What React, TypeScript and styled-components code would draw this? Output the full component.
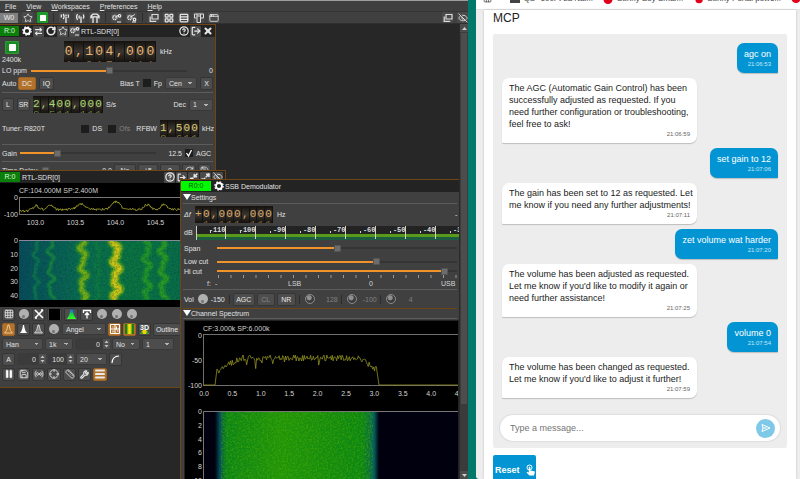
import React from "react";
import styled, { createGlobalStyle, css } from "styled-components";
import {
  Star, LayoutGrid, Rows3, AppWindow, EyeOff, CircleHelp, LogOut, X, RotateCw,
  ArrowRightLeft, Wrench, Minimize2, Maximize2, Grid3x3, Save, Radio, Crosshair, Ruler, Menu as MenuIcon, Pause,
} from "lucide-react";

const GlobalStyle = createGlobalStyle`
  * { box-sizing: border-box; }
  html, body, #root { height: 100%; }
  body { margin: 0; overflow: hidden; font-family: "Liberation Sans", Arial, sans-serif; }
  button, input, select { font: inherit; color: inherit; margin: 0; }
`;

const line = "#6e4513";
const panel = "#404040";

/* ---------- page frame ---------- */
const Page = styled.div`
  display: flex;
  height: 100vh;
  overflow: hidden;
  background: #00786a;
`;
const RadioApp = styled.main`
  flex: 0 0 58.5%;
  min-width: 0;
  display: flex;
  flex-direction: column;
  border-top: 1px solid #9b9f9d;
  background: ${panel};
  color: #e2e2e2;
  font-size: 7px;
  line-height: 9px;
`;
const MenuBar = styled.nav`
  display: flex;
  align-items: center;
  gap: 10px;
  height: 11px;
  padding-left: 5px;
  border-bottom: 1px solid #353535;
`;
const MenuItem = styled.button`
  border: 0;
  padding: 0;
  background: none;
  &::first-letter { text-decoration: underline; }
`;
const Toolbar = styled.div`
  display: flex;
  align-items: center;
  gap: 4px;
  height: 12px;
  border-bottom: 1px solid #303030;
`;
const WorkTag = styled.span`
  width: 18px;
  line-height: 10px;
  text-align: center;
  background: #808080;
  color: #eee;
`;
const Tool = styled.button<{ $on?: boolean; $flat?: boolean }>`
  display: inline-flex;
  align-items: center;
  justify-content: center;
  flex: none;
  width: 11px;
  height: 11px;
  padding: 0;
  border: 0;
  border-radius: 1px;
  color: #e6e6e6;
  background: ${(p) => (p.$on ? "#1f9a2c" : p.$flat ? "transparent" : "#4a4a4a")};
`;
const Divider = styled.i`
  width: 1px;
  height: 9px;
  margin: 0 1px;
  background: #2c2c2c;
`;
const Grow = styled.span`flex: 1;`;

const Desk = styled.div`
  flex: 1;
  min-height: 0;
  display: flex;
`;
const Canvas = styled.div`
  position: relative;
  flex: 1;
  overflow: hidden;
  background: #272727;
`;
const ScrollTrack = styled.div`
  display: flex;
  flex-direction: column;
  width: 9px;
  border-left: 1px solid #2a2a2a;
  background: #3b3b3b;
`;
const ScrollEnd = styled.button`
  display: flex;
  align-items: center;
  justify-content: center;
  height: 8px;
  padding: 0;
  border: 0;
  background: #4c4c4c;
`;
const ScrollThumb = styled.div`
  height: 82%;
  background: #4d4d4d;
  border: 1px solid #3c3c3c;
`;

/* ---------- sub-windows on the desktop ---------- */
const Win = styled.section<{ $x: number; $y: number; $w?: number; $h?: number }>`
  position: absolute;
  left: ${(p) => p.$x}px;
  top: ${(p) => p.$y}px;
  ${(p) => (p.$w ? css`width: ${p.$w}px;` : css`right: -1px;`)}
  ${(p) => (p.$h ? css`height: ${p.$h}px;` : css`bottom: -1px;`)}
  border: 1px solid ${line};
  border-left-width: ${(p) => (p.$x ? 1 : 0)}px;
  background: ${panel};
  overflow: hidden;
`;
const TitleBar = styled.header`
  display: flex;
  align-items: center;
  gap: 1px;
  height: 12px;
  padding-right: 2px;
  background: #232323;
`;
const Badge = styled.span<{ $w: number; $bright?: boolean }>`
  width: ${(p) => p.$w}px;
  line-height: 10px;
  margin-right: 1px;
  text-align: center;
  background: ${(p) => (p.$bright ? "#00fb00" : "#0a800a")};
  color: ${(p) => (p.$bright ? "#145014" : "#dff5df")};
`;
const Row = styled.div<{ $h: number; $mt?: number; $gap?: number; $pl?: number; $pr?: number }>`
  display: flex;
  align-items: center;
  gap: ${(p) => p.$gap ?? 3}px;
  height: ${(p) => p.$h}px;
  margin-top: ${(p) => p.$mt ?? 0}px;
  padding-left: ${(p) => p.$pl ?? 2}px;
  padding-right: ${(p) => p.$pr ?? 2}px;
  white-space: nowrap;
`;
const Rule = styled.hr<{ $mt?: number; $c?: string }>`
  height: 1px;
  margin: ${(p) => p.$mt ?? 2}px 2px 0;
  border: 0;
  background: ${(p) => p.$c ?? "#5c5c5c"};
`;
const Label = styled.label<{ $w?: number; $dim?: boolean; $right?: boolean }>`
  flex: none;
  width: ${(p) => (p.$w ? p.$w + "px" : "auto")};
  text-align: ${(p) => (p.$right ? "right" : "left")};
  color: ${(p) => (p.$dim ? "#808080" : "inherit")};
`;
const Btn = styled.button<{ $w: number; $on?: boolean; $dim?: boolean }>`
  display: inline-flex;
  align-items: center;
  justify-content: center;
  flex: none;
  width: ${(p) => p.$w}px;
  height: 13px;
  padding: 0;
  border: 1px solid ${(p) => (p.$on ? "#9b6424" : "#353535")};
  border-radius: 2px;
  background: ${(p) => (p.$on ? "#b3722a" : "#4d4d4d")};
  color: ${(p) => (p.$dim ? "#858585" : "#e8e8e8")};
`;
const Select = styled.select<{ $w: number }>`
  appearance: none;
  flex: none;
  width: ${(p) => p.$w}px;
  height: 12px;
  padding: 0 0 0 3px;
  border: 1px solid #393939;
  border-radius: 2px;
  background:
    linear-gradient(45deg, transparent 50%, #b5b5b5 50%) right 6px center / 2px 2px no-repeat,
    linear-gradient(-45deg, transparent 50%, #b5b5b5 50%) right 4px center / 2px 2px no-repeat,
    #4d4d4d;
`;
const Check = styled.input`
  appearance: none;
  flex: none;
  width: 8px;
  height: 8px;
  background: #1d1d1d;
  &:checked {
    background: #1d1d1d url("data:image/svg+xml,%3Csvg xmlns='http://www.w3.org/2000/svg' viewBox='0 0 8 8'%3E%3Cpath d='M1.5 4l2 3 3-6' fill='none' stroke='white' stroke-width='1.3'/%3E%3C/svg%3E");
  }
`;
const SpinBox = styled.span<{ $w: number }>`
  display: flex;
  align-items: center;
  flex: none;
  width: ${(p) => p.$w}px;
  height: 12px;
  border-radius: 2px;
  background: #3b3b3b;
  svg { flex: none; background: #505050; }
`;
const SpinInput = styled.input`
  flex: 1;
  min-width: 0;
  padding: 0 3px 0 0;
  border: 0;
  background: none;
  text-align: right;
`;
const Range = styled.input<{ $pct: number; $w?: number }>`
  appearance: none;
  flex: ${(p) => (p.$w ? "none" : "1")};
  width: ${(p) => (p.$w ? p.$w + "px" : "auto")};
  min-width: 0;
  height: 8px;
  background: linear-gradient(to right, #f0932b ${(p) => p.$pct}%, #353535 ${(p) => p.$pct}%) center / 100% 2px no-repeat;
  &::-webkit-slider-thumb {
    appearance: none;
    width: 7px;
    height: 7px;
    border-radius: 1px;
    border: 1px solid #555;
    background: #6c6c6c;
  }
`;
const Knob = styled.i<{ $dim?: boolean }>`
  flex: none;
  width: 10px;
  height: 10px;
  margin: 0 1px 0 2px;
  border-radius: 50%;
  background: ${(p) =>
    p.$dim
      ? "radial-gradient(circle at 40% 35%, #8f8f8f 0 2px, #3c3c3c 3px)"
      : "radial-gradient(circle at 45% 75%, #777 0 1px, #b0b0b0 2px)"};
  border: ${(p) => (p.$dim ? "1px solid #8a8a8a" : "0")};
`;
const Triangle = styled.i`
  width: 0;
  border: 4px solid transparent;
  border-top: 6px solid #fff;
  border-bottom: 0;
`;
const StartBox = styled.div`
  display: flex;
  flex-direction: column;
  width: 62px;
  gap: 1px;
`;
const StartBtn = styled.button`
  display: flex;
  align-items: center;
  justify-content: center;
  width: 14px;
  height: 13px;
  margin: 3px 0 0 3px;
  padding: 0;
  border: 1px solid #2f9a38;
  border-radius: 1px;
  background: #1c8a27;
`;

/* ---------- rolling digit dial ---------- */
const DialBox = styled.div<{ $w: number; $h: number; $c: string; $fs: number }>`
  display: flex;
  flex: none;
  width: ${(p) => p.$w}px;
  height: ${(p) => p.$h}px;
  overflow: hidden;
  background: #181410;
  color: ${(p) => p.$c};
  font: ${(p) => p.$fs}px/${(p) => p.$h - 6}px "Liberation Mono", monospace;
`;
const Reel = styled.span`
  display: flex;
  flex: 1;
  flex-direction: column;
  align-items: center;
  justify-content: center;
  border-right: 1px solid #141210;
  background: linear-gradient(#15120f, #3a352f 50%, #15120f);
  &::before, &::after { flex: none; opacity: 0.5; }
  &::before { content: attr(data-prev); }
  &::after { content: attr(data-next); }
`;

function Dial({ value, w, h, color, size }: { value: string; w: number; h: number; color: string; size: number }) {
  return (
    <DialBox $w={w} $h={h} $c={color} $fs={size}>
      {value.split("").map((c, i) => {
        const n = Number(c);
        const digit = !Number.isNaN(n);
        return (
          <Reel key={i} data-prev={digit ? (n + 9) % 10 : undefined} data-next={digit ? (n + 1) % 10 : undefined}>{c}</Reel>
        );
      })}
    </DialBox>
  );
}

/* ---------- small drawings ---------- */
const Stop = ({ s = 6 }: { s?: number }) => (
  <svg width={s} height={s} viewBox="0 0 6 6"><rect width="6" height="6" rx=".6" fill="#fff" /></svg>
);
const Cog = () => (
  <svg width="10" height="10" viewBox="0 0 10 10" fill="none" stroke="#fff">
    <circle cx="5" cy="5" r="3" strokeWidth="1.800" /><circle cx="5" cy="5" r="4.200" strokeWidth="1.200" strokeDasharray="1.650 1.650" />
  </svg>
);
const Cascade = () => (
  <svg width="10" height="10" viewBox="0 0 10 10" fill="none" stroke="#dcdcdc" strokeWidth="1.200"><path d="M3 1.500h6v4.500H3z" /><path d="M1.200 3.500v4.800h6" /></svg>
);
const Columns = () => (
  <svg width="10" height="10" viewBox="0 0 10 10" fill="none" stroke="#dcdcdc"><path d="M.5 1h9M.5 1v4h2M3 1v8.500h3.500V1M6.500 5h3V1M3 3h3.500" /></svg>
);
const Antenna = ({ kind }: { kind: number }) => (
  <svg width="10" height="10" viewBox="0 0 10 10" fill="none" stroke="#ececec" strokeWidth="1.300">
    {kind === 0 && <path d="M1 1.500q1 1.500 0 3M3.200 1q1.800 2.500 0 5M6 3.500V10M8 1.500q1.200 1.800 0 3.500M6 1.500v1.500" />}
    {kind === 1 && <path d="M2.600 1.200q-2 2.800 0 5.600M4.500 2.500q-1 1.500 0 3M6 3.500V10M8.200 1.500q1.200 2 0 4" />}
    {kind === 2 && <path d="M1 5.500V3l2-1.800h4L9 3v2.500M3 4v6M7 4v6M1 3.800h8" />}
  </svg>
);
const Gears = ({ down }: { down?: boolean }) => (
  <svg width="11" height="10" viewBox="0 0 11 10" fill="none" stroke="#e6e6e6">
    <circle cx="3.800" cy="4.500" r="2" strokeWidth="1.600" strokeDasharray="1.100 .5" />
    <circle cx="8.500" cy={down ? 6.5 : 2.8} r="1.300" strokeWidth="1.200" />
    <path d="M6 9h4M3.800 4.500l5-3" />
  </svg>
);
const Peak = ({ fill, stroke = "none" }: { fill: string; stroke?: string }) => (
  <svg width="9" height="10" viewBox="0 0 9 10">
    <path d="M.5 9q2.500-1 3.500-8h1q1 7 3.500 8z" fill={fill} stroke={stroke} strokeWidth=".9" />
  </svg>
);
const ColorPeak = () => (
  <svg width="11" height="11" viewBox="0 0 11 11">
    <defs>
      <linearGradient id="pk" x1="0" y1="0" x2="0" y2="1">
        <stop offset="0" stopColor="#1565ff" /><stop offset=".5" stopColor="#18d040" /><stop offset="1" stopColor="#38ff20" />
      </linearGradient>
    </defs>
    <path d="M.5 10q2.500-1.500 4-9.500h2q1.500 8 4 9.500z" fill="url(#pk)" />
  </svg>
);
const Bars = () => (
  <svg width="9" height="10" viewBox="0 0 9 10">
    <path d="M0 0h2v10H0zM7 0h2v10H7z" fill="#207a20" /><path d="M2 0h5v10H2z" fill="#7fae1c" /><path d="M3.300 0h2.400v10H3.300z" fill="#ffe600" />
  </svg>
);
const Wave = () => (
  <svg width="9" height="9" viewBox="0 0 9 9" fill="none" stroke="#fff" strokeWidth="1.200"><path d="M1 8Q1.500 1 8 1" /></svg>
);
const Cross = () => (
  <svg width="10" height="10" viewBox="0 0 10 10" stroke="#fff" strokeWidth="1.600"><path d="M1 1l8 8M9 1L1 9" /><path d="M1 9h2M7 1h2" /></svg>
);
const UpArrow = () => (
  <svg width="10" height="10" viewBox="0 0 10 10" fill="none" stroke="#fff" strokeWidth="1.300"><path d="M1.500 4V1.500h7V4M5 9.500V4M3 6l2-2.200L7 6" /></svg>
);
const Marks = () => (
  <svg width="10" height="10" viewBox="0 0 10 10" fill="none" stroke="#fff" strokeWidth="1"><path d="M.5.5h9v9h-9zM5 .5v9M.5 5h9M2.500 3h1M6.500 2.500v3M3 6.500v2M7 7h1.500" /></svg>
);
const Steps = () => (
  <svg width="7" height="10" viewBox="0 0 7 10" fill="#c2c2c2"><path d="M1.500 4l2-2.500 2 2.500zM1.500 6l2 2.500 2-2.500z" /></svg>
);
const Chevron = ({ up }: { up?: boolean }) => (
  <svg width="5" height="3" viewBox="0 0 5 3" fill="#cfcfcf"><path d={up ? "M0 3l2.500-3L5 3z" : "M0 0l2.500 3L5 0z"} /></svg>
);
const ThreeSvg = styled.svg`
  font: bold 7px "Liberation Sans", sans-serif;
  fill: #fff;
`;
const Three = () => (
  <ThreeSvg width="11" height="11" viewBox="0 0 11 11">
    <path d="M1 10l3-4h3l3 4z" fill="#e8d400" /><path d="M1 10l2-3 1 3zM10 10l-2-3-1 3z" fill="#2ca02c" />
    <text x="1" y="6">3D</text>
  </ThreeSvg>
);

/* ---------- plots ---------- */
const Chart = styled.svg`
  display: block;
  width: 100%;
  background: #000;
  font: 7px "Liberation Sans", Arial, sans-serif;
  fill: #d4d4d4;
`;
const MeterChart = styled.svg`
  display: block;
  flex: 1;
  min-width: 0;
  font: bold 7px "Liberation Mono", monospace;
  fill: #dcdcdc;
`;
const TickChart = styled.svg`
  display: block;
  width: 100%;
  fill: #d4d4d4;
`;

function rng(seed: number) {
  let s = seed;
  return () => ((s = (s * 16807) % 2147483647) / 2147483647);
}
function bandTrace() {
  const r = rng(42);
  const peaks = [[50, 4, 3], [36, 4, 2], [81, 6, 4], [116, 8, 4], [147, 5, 3], [164, 5, 3]];
  let d = "";
  for (let x = 20; x < 225; x += 0.7) {
    let y = x < 28 ? 28 : 26.5;
    for (const [px, h, w] of peaks) y -= h * Math.exp(-((x - px) ** 2) / (2 * w * w));
    y += (r() - 0.5) * 2.4;
    d += `${d ? "L" : "M"}${x.toFixed(1)} ${y.toFixed(1)}`;
  }
  return d;
}
function ssbTrace() {
  const r = rng(11);
  let d = "M19 64H30L31 56";
  for (let x = 32; x < 192; x += 0.9) {
    const t = (x - 32) / 160;
    const edge = Math.max(0, 1 - t * 7) * 14 + Math.max(0, t * 9 - 8) * 12;
    const y = 37 + edge + (r() - 0.5) * 6 + (r() > 0.92 ? r() * 10 : 0);
    d += `L${x.toFixed(1)} ${y.toFixed(1)}`;
  }
  return d + "L194 64H600";
}
function wiggle(cx: number, amp: number, phase: number) {
  let d = "";
  for (let y = 57; y <= 117; y += 1) {
    const x = cx + Math.sin(y / 3 + phase) * amp * 0.6 + Math.sin(y / 1.7 + phase * 2) * amp * 0.4;
    d += `${d ? "L" : "M"}${x.toFixed(1)} ${y}`;
  }
  return d;
}
const BAND = bandTrace();
const SSB = ssbTrace();

const Noise = ({ id, color }: { id: string; color: string }) => (
  <filter id={id} x="0" y="0" width="100%" height="100%">
    <feTurbulence type="fractalNoise" baseFrequency=".55" numOctaves="2" seed="4" />
    <feColorMatrix values="0 0 0 0 0  0 0 0 0 0  0 0 0 0 0  2.500 0 0 0 -1" result="n" />
    <feFlood floodColor={color} />
    <feComposite in2="n" operator="in" />
  </filter>
);

function BandPlot() {
  return (
    <Chart height="124">
      <defs>
        <linearGradient id="sea"><stop offset="0" stopColor="#084c5c" /><stop offset=".3" stopColor="#0a6c50" /><stop offset=".55" stopColor="#0a7440" /><stop offset="1" stopColor="#086850" /></linearGradient>
        <Noise id="n1" color="#04343c" />
        <filter id="soft"><feGaussianBlur stdDeviation=".8" /></filter>
        <clipPath id="wf"><rect x="19" y="57" width="206" height="60" /></clipPath>
      </defs>
      <text x="19" y="10">CF:104.000M SP:2.400M</text>
      <path d="M19.500 14.500H225M19.500 14v18M19.500 31.500H225" stroke="#777" fill="none" />
      <path d={BAND} fill="none" stroke="#b4b42c" strokeWidth=".8" />
      <g textAnchor="end">
        <text x="18" y="17">0</text><text x="18" y="34">-100</text>
        {[0, 10, 20, 30, 40].map((v, i) => <text key={v} x="18" y={60 + i * 14 - (i > 2 ? 1 : 0)}>{v}</text>)}
      </g>
      <g textAnchor="middle">
        {["103.0", "103.5", "104.0", "104.5"].map((v, i) => <text key={v} x={35.5 + i * 40} y="42">{v}</text>)}
      </g>
      <rect x="19" y="57" width="206" height="60" fill="url(#sea)" />
      <g clipPath="url(#wf)" fill="none">
        <g filter="url(#soft)">
          <path d={wiggle(36, 3, 0)} stroke="#12804a" strokeWidth="2.500" />
          <path d={wiggle(51, 4, 1)} stroke="#1b9238" strokeWidth="2.500" />
          <path d={wiggle(98, 2, 3)} stroke="#0e7a40" strokeWidth="4" />
          <path d={wiggle(83, 4, 2)} stroke="#2d9a20" strokeWidth="7" />
          <path d={wiggle(83, 4, 2)} stroke="#86b414" strokeWidth="3" />
          <path d={wiggle(116, 4, 4)} stroke="#4aa818" strokeWidth="9" />
          <path d={wiggle(116, 4, 4)} stroke="#d2c818" strokeWidth="5" />
          <path d={wiggle(147, 4, 5)} stroke="#249828" strokeWidth="5" />
          <path d={wiggle(163, 4, 1)} stroke="#2b9c22" strokeWidth="5" />
        </g>
      </g>
      <rect x="19" y="57" width="206" height="60" filter="url(#n1)" opacity=".35" />
      <path d="M19 57.500H225" stroke="#889" />
    </Chart>
  );
}

function ChannelPlot() {
  return (
    <Chart height="220">
      <defs>
        <linearGradient id="grass">
          <stop offset="0" stopColor="#00000f" /><stop offset=".03" stopColor="#06505a" /><stop offset=".07" stopColor="#0a8418" />
          <stop offset=".4" stopColor="#1f940a" /><stop offset=".9" stopColor="#0a8614" /><stop offset=".97" stopColor="#06605a" /><stop offset="1" stopColor="#00000f" />
        </linearGradient>
        <Noise id="n2" color="#5cb000" />
      </defs>
      <text x="18" y="10">CF:3.000k SP:6.000k</text>
      <path d="M18.500 13.500H600M18.500 13v52M18.500 64.500H600" stroke="#6f6f6f" fill="none" />
      <path d={SSB} fill="none" stroke="#8f8f22" strokeWidth=".8" />
      <g textAnchor="end">
        <text x="17" y="17">0</text><text x="17" y="42">-50</text><text x="17" y="67">-100</text>
        {[0, 2, 4, 6, 8, 10].map((v, i) => <text key={v} x="17" y={93 + i * 14 - (i > 2 ? 1 : 0)}>{v}</text>)}
      </g>
      <g textAnchor="middle">
        {Array.from({ length: 10 }, (_, i) => <text key={i} x={19 + i * 28.4} y="75">{(i / 2).toFixed(1)}</text>)}
      </g>
      <rect x="19" y="90" width="600" height="130" fill="#00000f" />
      <rect x="30" y="90" width="164" height="130" fill="url(#grass)" />
      <rect x="36" y="90" width="152" height="130" filter="url(#n2)" opacity=".5" />
      <path d="M18.500 220V90.500H600" stroke="#777" fill="none" />
    </Chart>
  );
}

function Meter() {
  return (
    <MeterChart height="14" aria-label="Signal level">
      <rect width="100%" height="14" fill="#232323" />
      <rect width="100%" y="8" height="3" fill="#5a9a1a" />
      <rect width="100%" y="11" height="3" fill="#1c5c40" />
      <path d="M.5 0v14" stroke="#ccc" />
      {Array.from({ length: 9 }, (_, i) => {
        const x = 29.5 + i * 30;
        return (
          <g key={i}>
            <text x={x} y="6" textAnchor="end">{-110 + i * 10}</text>
            <path d={`M${x} 0v13`} stroke="#d0d0d0" /><path d={`M${x - 15} 5v2`} stroke="#d0d0d0" />
          </g>
        );
      })}
    </MeterChart>
  );
}

function CutTicks() {
  return (
    <TickChart height="14">
      {Array.from({ length: 30 }, (_, i) => <path key={i} d={`M${37.5 + i * 12.5} 0v3`} stroke="#9a9a9a" />)}
      <text x="26" y="11">f:</text><text x="34" y="11">-</text>
      <text x="107" y="11">LSB</text><text x="188" y="11">0</text><text x="260" y="11">USB</text>
    </TickChart>
  );
}

const FieldStack = styled.div`
  display: grid;
  row-gap: 1px;
`;
const PlotPad = styled.div`
  margin: 1px 0 0 3px;
  border: 1px solid #222;
`;

function Spin({ w, label, value }: { w: number; label: string; value: string }) {
  return <SpinBox $w={w}><SpinInput aria-label={label} defaultValue={value} /><Steps /></SpinBox>;
}
function Pick({ w, label, value }: { w: number; label: string; value: string }) {
  return <Select $w={w} aria-label={label} defaultValue={value}><option>{value}</option></Select>;
}

function DeviceWindow() {
  return (
    <Win $x={0} $y={0} $w={216} $h={170}>
      <TitleBar>
        <Badge $w={19}>R:0</Badge>
        <Tool $flat aria-label="Settings"><Cog /></Tool>
        <Tool aria-label="Swap"><ArrowRightLeft size={9} strokeWidth={3} /></Tool>
        <Tool $flat aria-label="Reload"><RotateCw size={10} strokeWidth={4} /></Tool>
        <Tool aria-label="Presets"><Star size={10} /></Tool>
        <Tool aria-label="Plugins"><Gears /></Tool>
        <span>RTL-SDR[0]</span>
        <Grow />
        <Tool $flat aria-label="Help"><CircleHelp size={10} strokeWidth={3} /></Tool>
        <Tool aria-label="Move"><LogOut size={10} strokeWidth={3} /></Tool>
        <Tool $flat aria-label="Close"><X size={10} strokeWidth={5} /></Tool>
      </TitleBar>
      <Row $h={28} $gap={0}>
        <StartBox>
          <StartBtn aria-label="Stop"><Stop s={7} /></StartBtn>
          <span>2400k</span>
        </StartBox>
        <Dial value="0,104,000" w={92} h={21} color="#e9b673" size={13} />
        <Label>&nbsp;&nbsp;kHz</Label>
      </Row>
      <Row $h={11}>
        <Label $w={26} htmlFor="lo">LO ppm</Label>
        <Range id="lo" type="range" $pct={50} defaultValue={50} $w={156} />
        <Grow /><span>0</span>
      </Row>
      <Row $h={14}>
        <Label $w={13}>Auto</Label>
        <Btn $w={18} $on>DC</Btn>
        <Btn $w={15}>IQ</Btn>
        <Grow />
        <Label htmlFor="bias">Bias T</Label><Check id="bias" type="checkbox" />
        <Label>Fp</Label>
        <Pick w={32} label="Fp" value="Cen" />
        <Btn $w={13}>X</Btn>
      </Row>
      <Rule />
      <Row $h={17} $mt={3}>
        <Btn $w={12}>L</Btn>
        <Btn $w={13}>SR</Btn>
        <Dial value="2,400,000" w={70} h={17} color="#a9d86c" size={11} />
        <span>S/s</span>
        <Grow />
        <Label>Dec</Label>
        <Pick w={24} label="Dec" value="1" />
      </Row>
      <Row $h={17} $mt={7} $pr={1}>
        <span>Tuner: R820T</span>
        <Grow />
        <Check id="ds" type="checkbox" /><Label $w={13} htmlFor="ds">DS</Label>
        <Check id="ofs" type="checkbox" /><Label $w={14} $dim htmlFor="ofs">Ofs</Label>
        <Label>RFBW</Label>
        <Dial value="1,500" w={39} h={17} color="#dccb72" size={11} />
        <span>kHz</span>
      </Row>
      <Rule $mt={7} />
      <Row $h={12} $mt={2}>
        <Label $w={15} htmlFor="gain">Gain</Label>
        <Range id="gain" type="range" $pct={26} defaultValue={26} $w={136} />
        <Label $w={23} $right>12.5</Label>
        <Check id="agc" type="checkbox" defaultChecked />
        <Label htmlFor="agc">AGC</Label>
      </Row>
      <Rule />
      <Row $h={13} $mt={2} $gap={2}>
        <Label $w={38}>Time Delay</Label>
        <Range aria-label="Time delay" type="range" $pct={0} defaultValue={0} $w={50} />
        <Label $w={18} $right>0.0</Label>
        <Btn $w={22}>No</Btn><Btn $w={20}>+5</Btn><Btn $w={20}>0</Btn><Btn $w={14}><RotateCw size={9} /></Btn><Btn $w={13}><Save size={9} /></Btn>
      </Row>
    </Win>
  );
}

function SpectrumWindow() {
  return (
    <Win $x={0} $y={146} $w={226} $h={218}>
      <TitleBar>
        <Badge $w={20}>R:0</Badge>
        <span>RTL-SDR[0]</span>
        <Grow />
        <Tool aria-label="Help"><CircleHelp size={10} strokeWidth={3} /></Tool>
        <Tool aria-label="Move"><LogOut size={9} strokeWidth={3} /></Tool>
        <Tool aria-label="Shrink"><Minimize2 size={9} strokeWidth={4} /></Tool>
        <Tool aria-label="Maximize"><Maximize2 size={9} strokeWidth={4} /></Tool>
        <Tool aria-label="Hide"><EyeOff size={10} /></Tool>
      </TitleBar>
      <BandPlot />
      <FieldStack>
        <Row $h={14} $gap={2}>
          <Btn $w={13} aria-label="Grid"><Grid3x3 size={10} /></Btn><Knob />
          <Btn $w={13} aria-label="Clear"><Cross /></Btn>
          <Btn $w={15} aria-label="Trace colour"><svg width="11" height="11"><rect width="11" height="11" /></svg></Btn>
          <Btn $w={14} aria-label="Fill"><ColorPeak /></Btn>
          <Btn $w={13} aria-label="Raise"><UpArrow /></Btn>
          <Knob /><Knob /><Knob />
        </Row>
        <Row $h={14} $gap={2}>
          <Btn $w={13} $on aria-label="Max hold"><Peak fill="none" stroke="#f0d0a0" /></Btn>
          <Btn $w={13} aria-label="Current"><Peak fill="#fff" /></Btn>
          <Btn $w={13} aria-label="Histogram"><Peak fill="#888" stroke="#ddd" /></Btn>
          <Knob />
          <Pick w={44} label="Colour map" value="Angel" />
          <Btn $w={13} $on aria-label="Markers"><Marks /></Btn>
          <Btn $w={13} $on aria-label="Waterfall"><Bars /></Btn>
          <Btn $w={13} aria-label="3D spectrogram"><Three /></Btn>
          <Btn $w={28}>Outline</Btn>
        </Row>
        <Row $h={14} $gap={2}>
          <Pick w={41} label="Window" value="Han" />
          <Pick w={28} label="FFT size" value="1k" />
          <Spin w={35} label="Overlap" value="0" />
          <Pick w={28} label="Averaging" value="No" />
          <Pick w={32} label="Averages" value="1" />
        </Row>
        <Row $h={14} $gap={2}>
          <Btn $w={13}>A</Btn>
          <Spin w={29} label="Reference level" value="0" />
          <Spin w={26} label="Range" value="100" />
          <Pick w={31} label="Frame rate" value="20" />
          <Btn $w={13} aria-label="Linear"><Wave /></Btn>
        </Row>
        <Row $h={14} $gap={2}>
          <Btn $w={13} aria-label="Pause"><Pause size={10} fill="#fff" strokeWidth={1} /></Btn>
          <Btn $w={13} aria-label="Save"><Save size={10} /></Btn>
          <Btn $w={13} aria-label="Server"><Radio size={10} /></Btn>
          <Btn $w={14} aria-label="Centre"><Crosshair size={10} /></Btn>
          <Btn $w={13} aria-label="Measure"><Ruler size={10} /></Btn>
          <Btn $w={13} aria-label="Calibrate"><Wrench size={9} strokeWidth={3} /></Btn>
          <Btn $w={14} $on aria-label="Controls"><MenuIcon size={12} strokeWidth={4} /></Btn>
        </Row>
      </FieldStack>
    </Win>
  );
}

function DemodWindow() {
  return (
    <Win $x={180} $y={155}>
      <TitleBar>
        <Badge $w={30} $bright>R0:0</Badge>
        <Tool $flat aria-label="Settings"><Cog /></Tool>
        <span>SSB Demodulator</span>
      </TitleBar>
      <Row $h={10} $gap={0}><Triangle />Settings</Row>
      <Rule $mt={1} />
      <Row $h={17} $mt={2} $gap={0} $pl={3} $pr={0}>
        <Label $w={11}><i>Δf</i></Label>
        <Dial value="+0,000,000" w={78} h={17} color="#d9a768" size={11} />
        <Label $w={182}>&nbsp;&nbsp;Hz</Label>
        <span>-</span>
      </Row>
      <Row $h={15} $mt={2} $gap={0} $pl={3} $pr={0}>
        <Label $w={12}>dB</Label><Meter />
      </Row>
      <Row $h={12} $mt={2} $gap={0} $pl={3}>
        <Label $w={33} htmlFor="span">Span</Label><Range id="span" type="range" $pct={50} defaultValue={50} />
      </Row>
      <Row $h={11} $mt={2} $gap={0} $pl={3}>
        <Label $w={33} htmlFor="low">Low cut</Label><Range id="low" type="range" $pct={67} defaultValue={67} />
      </Row>
      <Row $h={8} $gap={0} $pl={3}>
        <Label $w={33} htmlFor="hi">Hi cut</Label><Range id="hi" type="range" $pct={95} defaultValue={96} />
      </Row>
      <CutTicks />
      <Rule $mt={0} />
      <Row $h={16} $mt={1} $gap={2} $pl={3}>
        <Label>Vol</Label><Knob /><Label $w={15}>-150</Label><Divider />
        <Btn $w={22}>AGC</Btn><Btn $w={18} $dim>CL</Btn><Btn $w={19}>NR</Btn><Divider />
        <Knob $dim /><Label $dim $right $w={20}>128</Label><Divider />
        <Knob $dim /><Label $dim $right $w={17}>-100</Label><Divider />
        <Knob $dim /><Label $dim $right $w={14}>4</Label>
      </Row>
      <Rule $mt={1} $c={line} />
      <Row $h={8} $gap={0}><Triangle />Channel Spectrum</Row>
      <Rule $mt={1} />
      <PlotPad><ChannelPlot /></PlotPad>
    </Win>
  );
}

/* ---------- chat page ---------- */
const Browser = styled.aside`
  flex: 1;
  min-width: 0;
  display: flex;
  flex-direction: column;
  margin-left: 8px;
  background: #ededee;
  border-bottom-left-radius: 3px;
  overflow: hidden;
`;
const Bookmarks = styled.nav`
  display: flex;
  height: 10px;
  flex: none;
  align-items: flex-start;
  gap: 10px;
  padding-left: 7px;
  overflow: hidden;
  white-space: nowrap;
  background: #fff;
  border-bottom: 1px solid #e2e2e2;
`;
const Bookmark = styled.a<{ $w: number }>`
  display: flex;
  flex: none;
  align-items: center;
  gap: 4px;
  width: ${(p) => p.$w}px;
  margin-top: -6px;
  color: #444;
  font-size: 8px;
  line-height: 10px;
  text-decoration: none;
`;
const Card = styled.div`
  flex: 1;
  min-height: 0;
  display: flex;
  flex-direction: column;
  margin: 0 4px 0 8px;
  padding: 0 9px;
  background: #fff;
  box-shadow: 0 0 2px #bbb;
`;
const Heading = styled.h1`
  margin: 1px 0 9px;
  font-size: 12px;
  line-height: 14px;
  font-weight: 400;
  color: #222;
`;
const Chat = styled.div`
  display: flex;
  flex-direction: column;
  flex: none;
  gap: 5px;
  padding: 9px 9px 7px;
  border-radius: 2px;
  background: #ededed;
`;
const Bubble = styled.div<{ $me?: boolean }>`
  align-self: ${(p) => (p.$me ? "flex-end" : "flex-start")};
  max-width: 195px;
  padding: ${(p) => (p.$me ? "5px 7px" : "4px 3px 5px 7px")};
  border-radius: ${(p) => (p.$me ? "7px 7px 1px 7px" : "7px 7px 7px 1px")};
  background: ${(p) => (p.$me ? "#0395d3" : "#fff")};
  color: ${(p) => (p.$me ? "#fff" : "#222")};
  box-shadow: 0 1px 1px #0003;
  font-size: 9px;
  line-height: 12px;
`;
const Stamp = styled.time<{ $me?: boolean }>`
  display: block;
  padding-right: ${(p) => (p.$me ? 0 : 4)}px;
  font-size: 6px;
  line-height: 8px;
  text-align: right;
  color: ${(p) => (p.$me ? "#c4e8f7" : "#666")};
`;
const Composer = styled.form`
  display: flex;
  align-items: center;
  height: 26px;
  margin: 12px -2px 0;
  padding: 0 5px 0 10px;
  border-radius: 13px;
  background: #fff;
  box-shadow: 0 0 2px #0003;
`;
const ChatInput = styled.input`
  flex: 1;
  min-width: 0;
  padding: 0;
  border: 0;
  outline: 0;
  font-size: 9px;
  color: #222;
  &::placeholder { color: #757575; }
`;
const Send = styled.button`
  display: flex;
  align-items: center;
  justify-content: center;
  width: 19px;
  height: 19px;
  padding: 0;
  border: 0;
  border-radius: 50%;
  background: #7fc9e8;
`;
const Reset = styled.button`
  display: flex;
  flex: none;
  align-items: center;
  justify-content: space-between;
  width: 43px;
  height: 29px;
  margin-top: 7px;
  padding: 0 1px 0 2px;
  border: 0;
  border-radius: 2px;
  background: #0395d3;
  color: #fff;
  font-size: 9px;
  font-weight: 700;
`;

const messages: { me?: boolean; text: string; at: string }[] = [
  { me: true, text: "agc on", at: "21:06:53" },
  { text: "The AGC (Automatic Gain Control) has been successfully adjusted as requested. If you need further configuration or troubleshooting, feel free to ask!", at: "21:06:59" },
  { me: true, text: "set gain to 12", at: "21:07:06" },
  { text: "The gain has been set to 12 as requested. Let me know if you need any further adjustments!", at: "21:07:11" },
  { me: true, text: "zet volume wat harder", at: "21:07:20" },
  { text: "The volume has been adjusted as requested. Let me know if you'd like to modify it again or need further assistance!", at: "21:07:25" },
  { me: true, text: "volume 0", at: "21:07:54" },
  { text: "The volume has been changed as requested. Let me know if you'd like to adjust it further!", at: "21:07:59" },
];

const SiteIcon = () => (
  <svg width="10" height="9" viewBox="0 0 10 9"><circle cx="5" cy="4.500" r="4.500" fill="#e2001a" /><path d="M0 4a4.500 4.500 0 0 1 4-4v5z" fill="#1b4f8f" /></svg>
);

export default function App() {
  return (
    <Page>
      <GlobalStyle />
      <RadioApp>
        <MenuBar>
          {["File", "View", "Workspaces", "Preferences", "Help"].map((m) => <MenuItem key={m}>{m}</MenuItem>)}
        </MenuBar>
        <Toolbar>
          <WorkTag>W0</WorkTag>
          <Tool aria-label="Favourites"><Star size={10} /></Tool>
          <Tool $on aria-label="Stop all"><Stop /></Tool>
          <Divider />
          <Tool aria-label="Add receiver"><Antenna kind={0} /></Tool>
          <Tool aria-label="Add transmitter"><Antenna kind={1} /></Tool>
          <Tool aria-label="Add MIMO"><Antenna kind={2} /></Tool>
          <Divider />
          <Tool aria-label="Add feature"><Gears /></Tool>
          <Tool aria-label="Feature presets"><Gears down /></Tool>
          <Divider />
          <Tool aria-label="Cascade"><Cascade /></Tool>
          <Tool aria-label="Tile"><LayoutGrid size={10} strokeWidth={3} /></Tool>
          <Tool aria-label="Stack"><Rows3 size={10} strokeWidth={3} /></Tool>
          <Tool aria-label="Stack tabs"><Columns /></Tool>
          <Tool aria-label="Tabs"><AppWindow size={10} /></Tool>
          <Grow />
          <Tool aria-label="Restore"><Cascade /></Tool>
          <Tool aria-label="Hide"><EyeOff size={10} /></Tool>
        </Toolbar>
        <Desk>
          <Canvas>
            <DeviceWindow />
            <SpectrumWindow />
            <DemodWindow />
          </Canvas>
          <ScrollTrack>
            <ScrollEnd aria-label="Scroll up"><Chevron up /></ScrollEnd>
            <ScrollThumb />
            <Grow />
            <ScrollEnd aria-label="Scroll down"><Chevron /></ScrollEnd>
          </ScrollTrack>
        </Desk>
      </RadioApp>
      <Browser>
        <Bookmarks>
          <Bookmark $w={17} href="#apps"><Grid3x3 size={9} /></Bookmark>
          <Bookmark $w={83} href="#radio"><svg width="10" height="8"><rect width="10" height="8" fill="#444" /></svg>QS* 100Ft La Nai...</Bookmark>
          <Bookmark $w={82} href="#sunny"><SiteIcon />Sunny Boy Smar...</Bookmark>
          <Bookmark $w={86} href="#portal"><SiteIcon />Sunny Portal powe...</Bookmark>
          <Bookmark $w={20} href="#more"><SiteIcon /></Bookmark>
        </Bookmarks>
        <Card>
          <Heading>MCP</Heading>
          <Chat>
            {messages.map((m) => (
              <Bubble key={m.at} $me={m.me}>{m.text}<Stamp $me={m.me}>{m.at}</Stamp></Bubble>
            ))}
            <Composer>
              <ChatInput aria-label="Message" placeholder="Type a message..." />
              <Send type="button" aria-label="Send">
                <svg width="10" height="10" viewBox="0 0 10 10" fill="none" stroke="#fff"><path d="M1 1.500L9 5 1 8.500 2 5zM2 5h3.500" /></svg>
              </Send>
            </Composer>
          </Chat>
          <Reset>
            Reset
            <svg width="9" height="12" viewBox="0 0 9 12">
              <circle cx="3.500" cy="3.500" r="2.500" fill="none" stroke="#fff" />
              <path d="M2.800 3q.8-.8 1.500 0v3.500l4 .8q.7.3.5 1L8 11.500H3.500L.5 8.500l.7-.7 1.600.8z" fill="#fff" />
            </svg>
          </Reset>
        </Card>
      </Browser>
    </Page>
  );
}
